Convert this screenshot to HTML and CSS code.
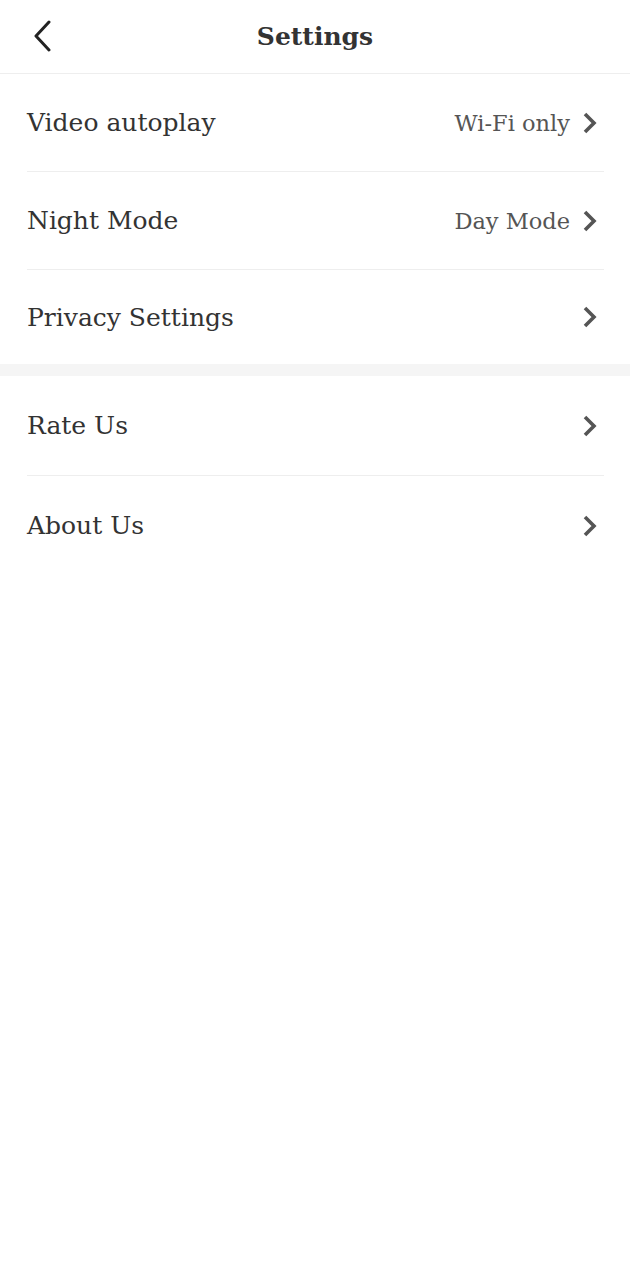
FILE: index.html
```html
<!DOCTYPE html>
<html>
<head>
  <meta charset="UTF-8">
  <title>Settings</title>
  <link rel="stylesheet" href="styles.css">
</head>
<body>
  <div class="topbar">
    <a class="back" href="#">
      <svg width="20" height="32" viewBox="0 0 20 32"><path d="M17 2 L4 16 L17 30" fill="none" stroke="#222" stroke-width="3" stroke-linecap="round" stroke-linejoin="round"/></svg>
    </a>
    <h1>Settings</h1>
  </div>

  <div class="group">
    <div class="row">
      <span class="label">Video autoplay</span>
      <span class="value">Wi-Fi only</span>
      <svg class="chev" width="16" height="24" viewBox="0 0 16 24"><path d="M3 3 L12 12 L3 21" fill="none" stroke="#555" stroke-width="3.6"/></svg>
    </div>
    <div class="row">
      <span class="label">Night Mode</span>
      <span class="value">Day Mode</span>
      <svg class="chev" width="16" height="24" viewBox="0 0 16 24"><path d="M3 3 L12 12 L3 21" fill="none" stroke="#555" stroke-width="3.6"/></svg>
    </div>
    <div class="row">
      <span class="label">Privacy Settings</span>
      <svg class="chev" width="16" height="24" viewBox="0 0 16 24"><path d="M3 3 L12 12 L3 21" fill="none" stroke="#555" stroke-width="3.6"/></svg>
    </div>
  </div>

  <div class="spacer"></div>

  <div class="group lower">
    <div class="row">
      <span class="label">Rate Us</span>
      <svg class="chev" width="16" height="24" viewBox="0 0 16 24"><path d="M3 3 L12 12 L3 21" fill="none" stroke="#555" stroke-width="3.6"/></svg>
    </div>
    <div class="row">
      <span class="label">About Us</span>
      <svg class="chev" width="16" height="24" viewBox="0 0 16 24"><path d="M3 3 L12 12 L3 21" fill="none" stroke="#555" stroke-width="3.6"/></svg>
    </div>
  </div>
</body>
</html>
```

FILE: styles.css
```css
body {
  margin: 0;
  background-color: #fff;
  font-family: "DejaVu Serif", serif;
  color: #333;
}

.topbar
{
  height: 73px;
  border-bottom: 1px solid #eee;
  display: flex;
  align-items: center;
  justify-content: center;
  position: relative;
}

.back
{
  position: absolute; /* sits over the centred title bar */
  left: 32px;
  top: 20px;
  display: block;
}

.topbar h1
{
  margin: 0;
  font-size: 25px;
  font-weight: bold;
  color: #333;
}

.group
{
  padding: 0 26px 0 27px;
}

.row
{
  height: 97px;
  display: flex;
  align-items: center;
  border-bottom: 1px solid #eee;
}

.row:last-child { border-bottom: none; height: 94px; }

.lower .row { height: 99px; }

.label
{
  flex: 1;
  font-size: 25px;
  color: #333;
}

.value
{
  font-size: 22.5px;
  color: #555;
  margin-right: 12px;
}

.chev { margin-right: 6px; }

.spacer
{
  height: 12px;
  background-color: #f5f5f5;
}
```
